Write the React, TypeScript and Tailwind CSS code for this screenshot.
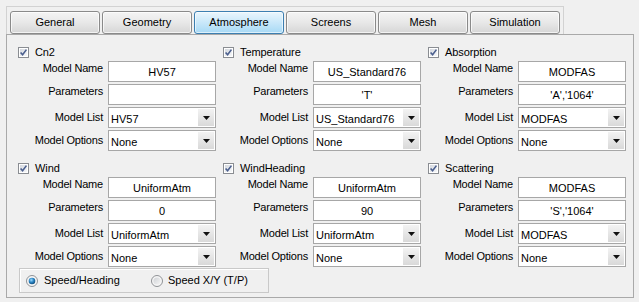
import React from 'react';

type Group = {
  title: string;
  name: string;
  params: string;
  list: string;
  options: string;
};

const topGroups: Group[] = [
  { title: 'Cn2', name: 'HV57', params: '', list: 'HV57', options: 'None' },
  { title: 'Temperature', name: 'US_Standard76', params: "'T'", list: 'US_Standard76', options: 'None' },
  { title: 'Absorption', name: 'MODFAS', params: "'A','1064'", list: 'MODFAS', options: 'None' },
];

const bottomGroups: Group[] = [
  { title: 'Wind', name: 'UniformAtm', params: '0', list: 'UniformAtm', options: 'None' },
  { title: 'WindHeading', name: 'UniformAtm', params: '90', list: 'UniformAtm', options: 'None' },
  { title: 'Scattering', name: 'MODFAS', params: "'S','1064'", list: 'MODFAS', options: 'None' },
];

const tabs = ['General', 'Geometry', 'Atmosphere', 'Screens', 'Mesh', 'Simulation'];

const CheckBox = () => (
  <svg width="11" height="11" viewBox="0 0 11 11" className="shrink-0">
    <defs>
      <linearGradient id="cbfill" x1="0" y1="0" x2="1" y2="1">
        <stop offset="0" stopColor="#d4d8de" />
        <stop offset="1" stopColor="#f7f8fa" />
      </linearGradient>
    </defs>
    <rect x="0.5" y="0.5" width="10" height="10" fill="#ffffff" stroke="#8a8d92" />
    <rect x="2" y="2" width="7" height="7" fill="url(#cbfill)" />
    <path d="M2.6 5.4 L4.6 7.8 L8.4 2.6" fill="none" stroke="#4b5f8e" strokeWidth="1.6" />
  </svg>
);

const Radio = ({ on }: { on: boolean }) => (
  <svg width="12" height="12" viewBox="0 0 12 12" className="shrink-0">
    <defs>
      <radialGradient id="rdOn" cx="0.4" cy="0.35" r="0.7">
        <stop offset="0" stopColor="#9fdcff" />
        <stop offset="0.5" stopColor="#2a85c4" />
        <stop offset="1" stopColor="#0d4674" />
      </radialGradient>
      <linearGradient id="rdOff" x1="0" y1="0" x2="1" y2="1">
        <stop offset="0" stopColor="#cfd2d6" />
        <stop offset="1" stopColor="#f5f5f5" />
      </linearGradient>
    </defs>
    <circle cx="6" cy="6" r="5.5" fill="#f6f6f6" stroke="#8f9296" />
    {on ? <circle cx="6" cy="6" r="3.3" fill="url(#rdOn)" /> : <circle cx="6" cy="6" r="3.6" fill="url(#rdOff)" />}
  </svg>
);

const Label = ({ text, combo }: { text: string; combo?: boolean }) => (
  <div className={`w-[85px] shrink-0 text-right leading-[13px] tracking-[-0.2px] ${combo ? 'pt-[4px]' : 'pt-[1px]'}`}>
    {text}
  </div>
);

const TextField = ({ value }: { value: string }) => (
  <div className="w-[108px] h-[21px] bg-white border border-[#a7a7a7] flex items-center justify-center pt-[2px] leading-[13px]">
    {value}
  </div>
);

const Combo = ({ value }: { value: string }) => (
  <div className="w-[108px] h-[21px] bg-white border border-[#a7a7a7] flex items-stretch">
    <div className="flex-1 flex items-center pl-[2px] pt-[3px] leading-[13px]">{value}</div>
    <div className="w-[16px] m-[1px] bg-gradient-to-b from-[#f3f3f3] to-[#d9d9d9] flex items-center justify-center">
      <svg width="7" height="4" viewBox="0 0 7 4">
        <path d="M0 0 H7 L3.5 4 Z" fill="#111111" />
      </svg>
    </div>
  </div>
);

const GroupBlock = ({ g }: { g: Group }) => (
  <div className="w-[205px] flex flex-col">
    <div className="h-[18px] flex items-center gap-[6px]">
      <CheckBox />
      <span className="leading-[13px] tracking-[-0.1px]">{g.title}</span>
    </div>
    <div className="flex flex-col gap-[2px]">
      <div className="flex items-start gap-[5px]">
        <Label text="Model Name" />
        <TextField value={g.name} />
      </div>
      <div className="flex items-start gap-[5px]">
        <Label text="Parameters" />
        <TextField value={g.params} />
      </div>
      <div className="flex items-start gap-[5px]">
        <Label text="Model List" combo />
        <Combo value={g.list} />
      </div>
      <div className="flex items-start gap-[5px]">
        <Label text="Model Options" combo />
        <Combo value={g.options} />
      </div>
    </div>
  </div>
);

export default function App() {
  return (
    <div className="w-[639px] h-[302px] bg-[#f0f0f0] overflow-hidden font-['Liberation_Sans',Arial,sans-serif] text-[11px] text-black">
      <div className="pt-[6px] pl-[6px]">
        {/* tab strip */}
        <div className="w-[558px] h-[28px] border-t border-l border-r border-[#d2d2d2] flex gap-[2px] pl-[3px] pt-[4px]">
          {tabs.map((t) =>
            t === 'Atmosphere' ? (
              <div
                key={t}
                className="w-[90px] h-[23px] rounded-[3px] border border-[#3c7fb1] bg-gradient-to-b from-[#eaf6fd] to-[#a7d9f5] flex items-center justify-center shadow-[inset_0_0_0_1px_rgba(255,255,255,0.6)]"
              >
                {t}
              </div>
            ) : (
              <div
                key={t}
                className="w-[90px] h-[23px] rounded-[3px] border border-[#8a8a8a] bg-gradient-to-b from-[#f4f4f4] via-[#e8e8e8] to-[#d6d6d6] flex items-center justify-center shadow-[inset_0_0_0_1px_rgba(255,255,255,0.7)]"
              >
                {t}
              </div>
            )
          )}
        </div>

        {/* content panel */}
        <div className="w-[628px] h-[264px] border border-[#a9a9a9] pl-[11px] pt-[8px]">
          <div className="flex">
            {topGroups.map((g) => (
              <GroupBlock key={g.title} g={g} />
            ))}
          </div>
          <div className="flex mt-[8px]">
            {bottomGroups.map((g) => (
              <GroupBlock key={g.title} g={g} />
            ))}
          </div>
          <div className="ml-[1px] mt-[1px] w-[250px] h-[25px] border border-[#c9c9c9] shadow-[inset_1px_1px_0_#ffffff] flex items-center pl-[6px]">
            <div className="w-[125px] flex items-center gap-[6px]">
              <Radio on />
              <span className="leading-[13px]">Speed/Heading</span>
            </div>
            <div className="flex items-center gap-[5px]">
              <Radio on={false} />
              <span className="leading-[13px]">Speed X/Y (T/P)</span>
            </div>
          </div>
        </div>
      </div>
    </div>
  );
}
